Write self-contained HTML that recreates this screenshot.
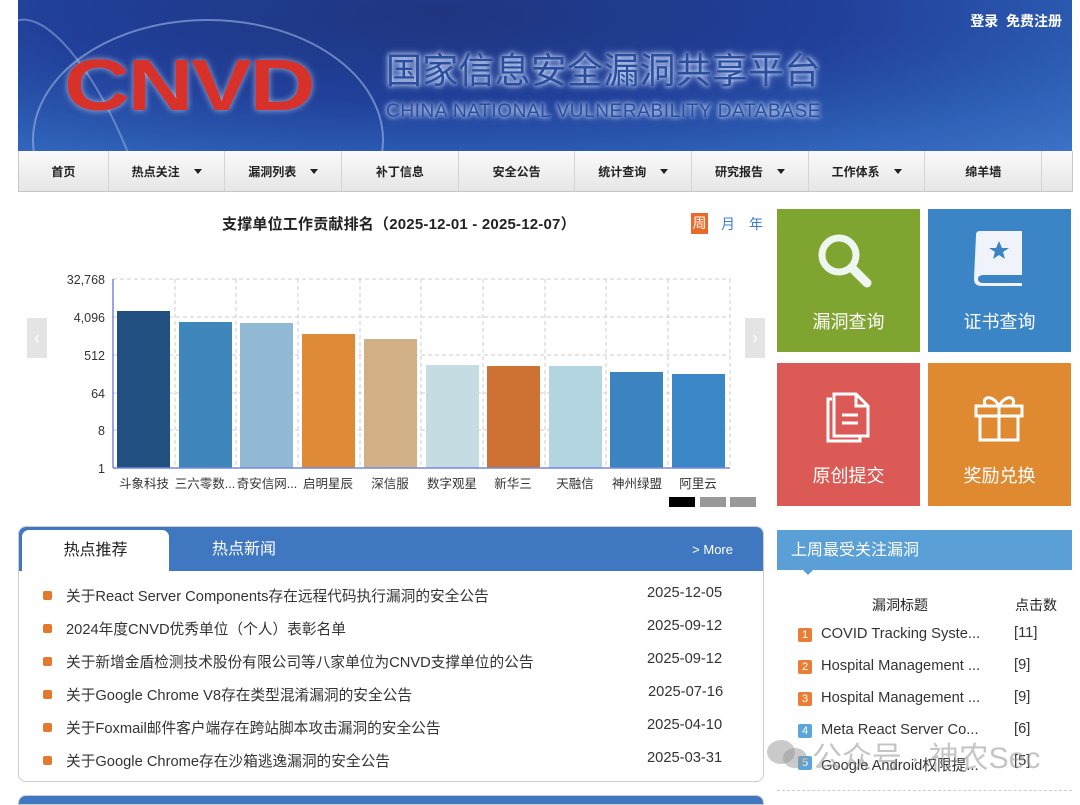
<!DOCTYPE html>
<html><head><meta charset="utf-8"><style>
*{margin:0;padding:0;box-sizing:border-box}
body{width:1080px;height:800px;overflow:hidden;background:#fff;font-family:"Liberation Sans","Noto Sans CJK SC",sans-serif;position:relative;color:#222}
.abs{position:absolute}
#hdr{left:18px;top:0;width:1054px;height:151px;background:radial-gradient(ellipse at 40% 10%,#1f3580 0%,#21409a 45%,#2f62b8 80%,#3d72c6 100%);overflow:hidden}
#nav{left:18px;top:151px;width:1055px;height:41px;background:linear-gradient(#fafafa,#e6e6e6);border:1px solid #c8c8c8;border-top:none;display:flex}
#nav div{width:117px;border-right:1px solid #d4d4d4;font-size:12px;font-weight:bold;color:#222;display:flex;align-items:center;justify-content:center;gap:14px}
#nav span.t{width:0;height:0;border-left:4px solid transparent;border-right:4px solid transparent;border-top:5px solid #222}
.tile{width:143px;height:143px;color:#fff;font-size:18px;text-align:center}
.tile .lb{position:absolute;left:0;right:0;bottom:18px}
.news{font-size:14.7px;color:#333}
.bul{width:9px;height:9px;background:#e4782b;border-radius:2px;position:absolute;left:43px}
.num{width:14px;height:14px;color:#fff;font-size:11px;text-align:center;line-height:14px;border-radius:2px;position:absolute;left:798px}
</style></head><body>
<div id="hdr" class="abs">
<svg width="1054" height="151" class="abs" style="left:0;top:0">
<ellipse cx="190" cy="140" rx="175" ry="120" fill="none" stroke="#9fb6e4" stroke-width="2" opacity=".6"/>
<ellipse cx="60" cy="190" rx="60" ry="180" fill="none" stroke="#9fb6e4" stroke-width="2" opacity=".5" transform="rotate(-20 60 190)"/>
</svg>
<div class="abs" style="left:46px;top:46px;font-size:72px;font-weight:bold;color:#d8312a;letter-spacing:-2px;transform:scaleX(1.27);transform-origin:left;line-height:80px;text-shadow:0 0 6px rgba(255,255,255,.6)">CNVD</div>
<div class="abs" style="left:368px;top:50px;font-size:36px;color:#2a4e9e;letter-spacing:.2px;line-height:42px;text-shadow:0 0 4px #dfe9ff,0 0 8px #b8ccf4">国家信息安全漏洞共享平台</div>
<div class="abs" style="left:368px;top:101px;font-size:19px;color:#2a4e9e;letter-spacing:.6px;text-shadow:0 0 4px #dfe9ff,0 0 7px #b8ccf4">CHINA NATIONAL VULNERABILITY DATABASE</div>
<div class="abs" style="right:10px;top:11px;font-size:14px;font-weight:bold;color:#fff">登录&nbsp;&nbsp;免费注册</div>
</div>
<div id="nav" class="abs">
<div style="width:90px">首页</div><div>热点关注<span class="t"></span></div><div>漏洞列表<span class="t"></span></div><div>补丁信息</div><div>安全公告</div><div>统计查询<span class="t"></span></div><div>研究报告<span class="t"></span></div><div>工作体系<span class="t"></span></div><div>绵羊墙</div><div style="border:none;width:30px"></div>
</div>

<div class="abs" style="left:222px;top:213px;font-size:15px;font-weight:bold;letter-spacing:.2px">支撑单位工作贡献排名（2025-12-01 - 2025-12-07）</div>
<div class="abs" style="left:691px;top:213px;width:17px;height:21px;background:#ea6a2a;color:#fff;font-size:14px;text-align:center;line-height:21px">周</div>
<div class="abs" style="left:721px;top:214px;font-size:14px;color:#3a7dd0">月</div>
<div class="abs" style="left:749px;top:214px;font-size:14px;color:#3a7dd0">年</div>

<svg class="abs" style="left:0;top:260px" width="770" height="260">
<g stroke="#ccc" stroke-dasharray="4,3" fill="none">
<line x1="113" y1="19" x2="730" y2="19"/><line x1="113" y1="57" x2="730" y2="57"/><line x1="113" y1="95" x2="730" y2="95"/><line x1="113" y1="133" x2="730" y2="133"/><line x1="113" y1="170" x2="730" y2="170"/>
<line x1="175" y1="19" x2="175" y2="208"/><line x1="236" y1="19" x2="236" y2="208"/><line x1="298" y1="19" x2="298" y2="208"/><line x1="360" y1="19" x2="360" y2="208"/><line x1="421" y1="19" x2="421" y2="208"/><line x1="483" y1="19" x2="483" y2="208"/><line x1="545" y1="19" x2="545" y2="208"/><line x1="606" y1="19" x2="606" y2="208"/><line x1="668" y1="19" x2="668" y2="208"/><line x1="730" y1="19" x2="730" y2="208"/>
</g>
<rect x="117" y="51" width="53" height="157" fill="#214f80"/>
<rect x="179" y="62" width="53" height="146" fill="#3f87ba"/>
<rect x="240" y="63" width="53" height="145" fill="#91b9d3"/>
<rect x="302" y="74" width="53" height="134" fill="#df8a36"/>
<rect x="364" y="79" width="53" height="129" fill="#d2b085"/>
<rect x="426" y="105" width="53" height="103" fill="#c4dce2"/>
<rect x="487" y="106" width="53" height="102" fill="#cd7233"/>
<rect x="549" y="106" width="53" height="102" fill="#b2d5e1"/>
<rect x="610" y="112" width="53" height="96" fill="#3c84bf"/>
<rect x="672" y="114" width="53" height="94" fill="#3b87c7"/>
<line x1="113" y1="19" x2="113" y2="208" stroke="#7788dd" stroke-width="1.5"/>
<line x1="113" y1="208" x2="730" y2="208" stroke="#7788dd" stroke-width="1.5"/>
<g font-size="12.5" fill="#333" text-anchor="end" font-family="Liberation Sans,sans-serif">
<text x="105" y="24">32,768</text><text x="105" y="62">4,096</text><text x="105" y="100">512</text><text x="105" y="138">64</text><text x="105" y="175">8</text><text x="105" y="213">1</text></g>
<g font-size="12.5" fill="#333" text-anchor="middle" font-family="Liberation Sans,Noto Sans CJK SC,sans-serif">
<text x="144" y="228">斗象科技</text><text x="205" y="228">三六零数...</text><text x="267" y="228">奇安信网...</text><text x="328" y="228">启明星辰</text><text x="390" y="228">深信服</text><text x="452" y="228">数字观星</text><text x="513" y="228">新华三</text><text x="575" y="228">天融信</text><text x="637" y="228">神州绿盟</text><text x="698" y="228">阿里云</text></g>
<rect x="27" y="58" width="20" height="40" fill="#e4e4e4"/><text x="37" y="84" font-size="18" fill="#fff" text-anchor="middle">‹</text>
<rect x="745" y="58" width="20" height="40" fill="#e4e4e4"/><text x="755" y="84" font-size="18" fill="#fff" text-anchor="middle">›</text>
<rect x="669" y="237" width="26" height="10" fill="#000"/><rect x="700" y="237" width="26" height="10" fill="#999"/><rect x="730" y="237" width="26" height="10" fill="#999"/>
</svg>

<div class="abs tile" style="left:777px;top:209px;background:#80a430">
<svg class="abs" style="left:38px;top:22px" width="60" height="60"><circle cx="24" cy="24" r="17" fill="none" stroke="#eef6f0" stroke-width="7"/><line x1="37" y1="37" x2="52" y2="52" stroke="#eef6f0" stroke-width="9" stroke-linecap="round"/></svg>
<div class="lb">漏洞查询</div></div>
<div class="abs tile" style="left:928px;top:209px;background:#3b84c6">
<svg class="abs" style="left:46px;top:22px" width="50" height="55"><path d="M2 4 Q2 0 6 0 H48 V44 H10 Q4 44 4 48 Q4 52 10 52 H48 V55 H8 Q0 55 0 48 Z" fill="#f0f4fa"/><path d="M25 10 L28 17 L35 17 L29 21 L31 28 L25 24 L19 28 L21 21 L15 17 L22 17Z" fill="#3b84c6"/><rect x="12" y="44" width="36" height="3" fill="#3b84c6"/></svg>
<div class="lb">证书查询</div></div>
<div class="abs tile" style="left:777px;top:363px;background:#db5a55">
<svg class="abs" style="left:47px;top:28px" width="50" height="55" fill="none" stroke="#fff" stroke-width="3"><path d="M8 8 H4 V50 H36 V46"/><path d="M10 3 H32 L44 15 V45 H10 Z"/><path d="M32 3 V15 H44"/><line x1="18" y1="24" x2="34" y2="24"/><line x1="18" y1="32" x2="34" y2="32"/></svg>
<div class="lb">原创提交</div></div>
<div class="abs tile" style="left:928px;top:363px;background:#df8a30">
<svg class="abs" style="left:46px;top:30px" width="52" height="50" fill="none" stroke="#fff" stroke-width="3"><rect x="2" y="13" width="46" height="10"/><rect x="6" y="23" width="38" height="24"/><line x1="25" y1="13" x2="25" y2="47"/><path d="M25 13 C18 0 6 4 12 13"/><path d="M25 13 C32 0 44 4 38 13"/></svg>
<div class="lb">奖励兑换</div></div>

<div class="abs" style="left:18px;top:526px;width:746px;height:256px;border:1px solid #ccc;border-radius:8px;overflow:hidden">
<div style="height:44px;background:#3f78c0;position:relative">
<div class="abs" style="left:3px;top:3px;width:147px;height:42px;background:#fff;border-radius:7px 7px 0 0;font-size:16px;text-align:center;line-height:42px">热点推荐</div>
<div class="abs" style="left:193px;top:0;font-size:16px;color:#fff;line-height:46px">热点新闻</div>
<div class="abs" style="right:30px;top:0;font-size:13px;color:#fff;line-height:46px">&gt; More</div>
</div></div>
<div class="news">
<div class="bul" style="top:591px"></div><div class="abs" style="left:66px;top:585px">关于React Server Components存在远程代码执行漏洞的安全公告</div><div class="abs" style="left:647px;top:585px">2025-12-05</div>
<div class="bul" style="top:624px"></div><div class="abs" style="left:66px;top:618px">2024年度CNVD优秀单位（个人）表彰名单</div><div class="abs" style="left:647px;top:618px">2025-09-12</div>
<div class="bul" style="top:657px"></div><div class="abs" style="left:66px;top:651px">关于新增金盾检测技术股份有限公司等八家单位为CNVD支撑单位的公告</div><div class="abs" style="left:647px;top:651px">2025-09-12</div>
<div class="bul" style="top:690px"></div><div class="abs" style="left:66px;top:684px">关于Google Chrome V8存在类型混淆漏洞的安全公告</div><div class="abs" style="left:648px;top:684px">2025-07-16</div>
<div class="bul" style="top:723px"></div><div class="abs" style="left:66px;top:717px">关于Foxmail邮件客户端存在跨站脚本攻击漏洞的安全公告</div><div class="abs" style="left:647px;top:717px">2025-04-10</div>
<div class="bul" style="top:756px"></div><div class="abs" style="left:66px;top:750px">关于Google Chrome存在沙箱逃逸漏洞的安全公告</div><div class="abs" style="left:647px;top:750px">2025-03-31</div>
</div>
<div class="abs" style="left:18px;top:795px;width:746px;height:10px;background:#3f78c0;border-radius:8px 8px 0 0;border:1px solid #ccc"></div>

<div class="abs" style="left:777px;top:530px;width:295px;height:40px;background:#5a9fd6;color:#fff;font-size:16px;line-height:42px;padding-left:14px">上周最受关注漏洞</div>
<div class="abs" style="left:803px;top:570px;width:0;height:0;border-left:5px solid transparent;border-right:5px solid transparent;border-top:5px solid #5a9fd6"></div>
<div class="abs" style="left:872px;top:595px;font-size:14px">漏洞标题</div>
<div class="abs" style="left:1015px;top:595px;font-size:14px">点击数</div>
<div class="news">
<div class="num" style="top:628px;background:#ea7e35">1</div><div class="abs" style="left:821px;top:626px">COVID Tracking Syste...</div><div class="abs" style="left:1014px;top:625px">[11]</div>
<div class="num" style="top:660px;background:#ea7e35">2</div><div class="abs" style="left:821px;top:658px">Hospital Management ...</div><div class="abs" style="left:1014px;top:657px">[9]</div>
<div class="num" style="top:692px;background:#ea7e35">3</div><div class="abs" style="left:821px;top:690px">Hospital Management ...</div><div class="abs" style="left:1014px;top:689px">[9]</div>
<div class="num" style="top:724px;background:#5aa5dc">4</div><div class="abs" style="left:821px;top:722px">Meta React Server Co...</div><div class="abs" style="left:1014px;top:721px">[6]</div>
<div class="num" style="top:756px;background:#5aa5dc">5</div><div class="abs" style="left:821px;top:754px">Google Android权限提...</div><div class="abs" style="left:1014px;top:753px">[5]</div>
</div>
<div class="abs" style="left:777px;top:790px;width:295px;border-top:1px dashed #ccc"></div>
<svg class="abs" style="left:763px;top:738px" width="50" height="32"><ellipse cx="18" cy="14" rx="14" ry="12" fill="rgba(150,150,150,.5)"/><ellipse cx="32" cy="20" rx="12" ry="10" fill="rgba(150,150,150,.5)"/></svg>
<div class="abs" style="left:812px;top:733px;font-size:30px;color:rgba(150,150,150,.55);white-space:nowrap;letter-spacing:0">公众号 · 神农Sec</div>
</body></html>
